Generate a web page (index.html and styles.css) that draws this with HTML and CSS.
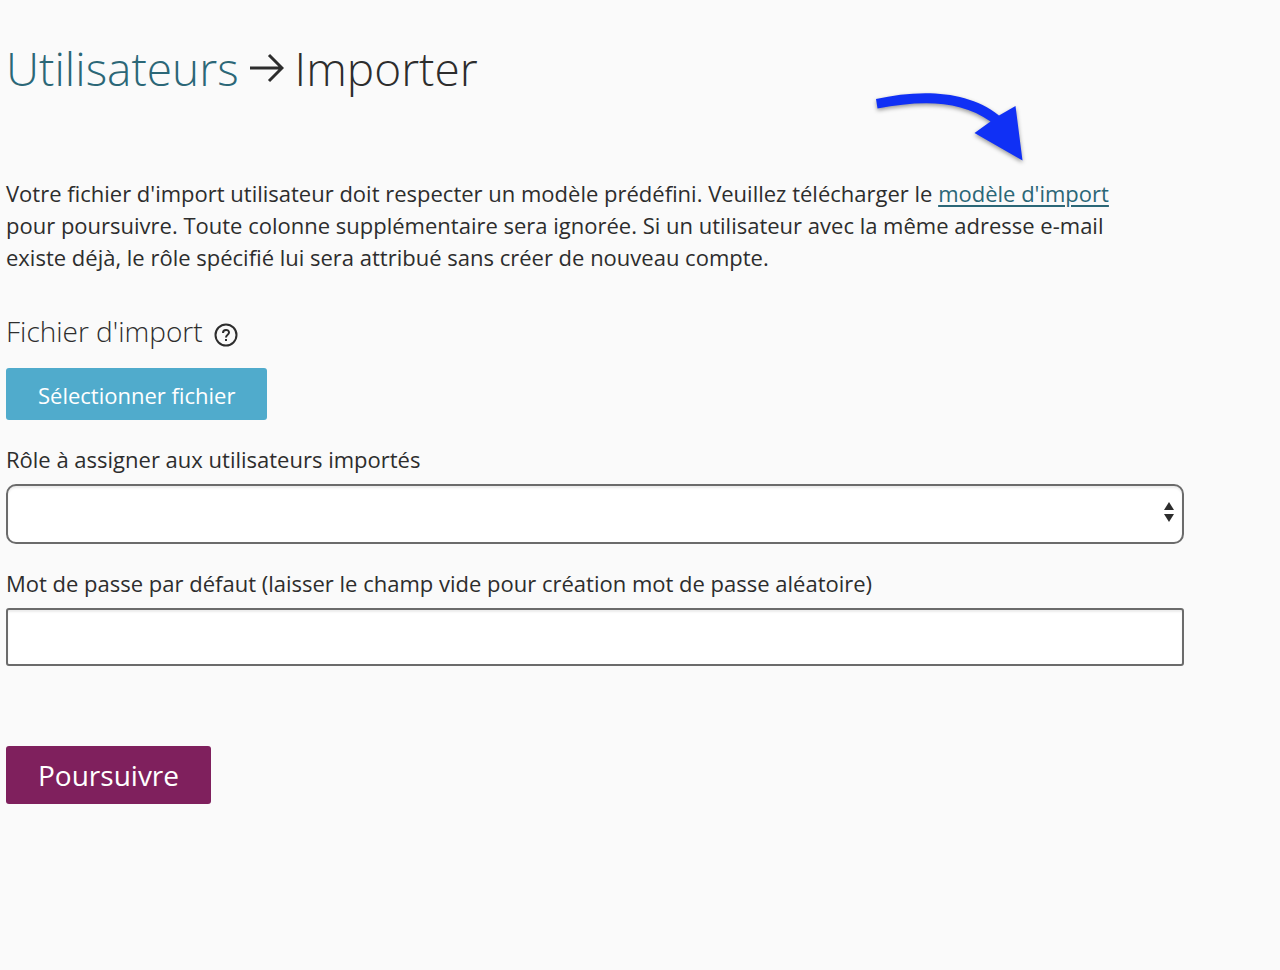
FILE: index.html
```html
<!DOCTYPE html>
<html lang="fr">
<head>
<meta charset="utf-8">
<title>Importer des utilisateurs</title>
<link rel="stylesheet" href="styles.css">
</head>
<body>
<main class="page">
  <h1 class="title">
    <a class="title-link" href="#">Utilisateurs</a>
    <svg class="title-arrow" viewBox="0 0 34 30" aria-hidden="true"><path d="M0 15H32M19 2L32 15L19 28"/></svg>
    <span>Importer</span>
  </h1>
  <p class="intro">Votre fichier d'import utilisateur doit respecter un modèle prédéfini. Veuillez télécharger le <a class="link" href="#">modèle d'import<svg class="pointer" viewBox="0 0 154 76" aria-hidden="true"><path d="M4 11C45 2 94 1 127 27.500L143.500 18L150.500 72.500L102.500 45L118.500 33.500C88 12 50 12 5.500 20.500Z"/></svg></a> pour poursuivre. Toute colonne supplémentaire sera ignorée. Si un utilisateur avec la même adresse e-mail existe déjà, le rôle spécifié lui sera attribué sans créer de nouveau compte.</p>
  <form class="form">
    <section class="file">
      <h2 class="subtitle">Fichier d'import
        <svg class="help" viewBox="0 0 24 24" aria-hidden="true"><circle cx="12" cy="12" r="10.500"/><path d="M9 10C9 6 15 6 15 9.500C15 12 12 11.500 12 14.500M12 16V18"/></svg>
      </h2>
      <button class="button select-file" type="button">Sélectionner fichier</button>
    </section>
    <div class="field">
      <label for="role">Rôle à assigner aux utilisateurs importés</label>
      <div class="select-wrap">
        <select class="control select" id="role"><option></option></select>
        <svg class="caret" viewBox="0 0 10 20" aria-hidden="true"><path d="M0 8L5 0L10 8ZM0 12H10L5 20Z"/></svg>
      </div>
    </div>
    <div class="field">
      <label for="password">Mot de passe par défaut (laisser le champ vide pour création mot de passe aléatoire)</label>
      <input class="control" id="password" type="text">
    </div>
    <button class="button submit" type="submit">Poursuivre</button>
  </form>
</main>
</body>
</html>
```
FILE: styles.css
```css
* { box-sizing: border-box; }
body {
  margin: 0;
  background: #fafafa;
  color: #2d2d2d;
  font: 400 22px/32px "Open Sans", sans-serif;
}
.page { padding: 35px 96px 35px 6px; }
.title {
  display: flex;
  align-items: center;
  gap: 11px;
  margin: 0 0 76px;
  font-size: 46px;
  line-height: 66px;
  font-weight: 300;
}
.title-link { color: #2b6777; text-decoration: none; }
.title-arrow { width: 34px; height: 30px; fill: none; stroke: currentColor; stroke-width: 3; }
.intro { margin: 0; max-width: 1140px; }
.link { position: relative; color: #2b6777; text-decoration-thickness: 2px; text-underline-offset: 3px; }
.pointer { position: absolute; right: 83px; bottom: 44px; width: 154px; height: 76px; fill: #1030f5; filter: drop-shadow(0 2px 2px rgba(0, 0, 0, .4)); }
.form { display: flex; flex-direction: column; gap: 23px; margin-top: 37px; }
.subtitle {
  display: flex;
  align-items: center;
  gap: 11px;
  margin: 0 0 16px;
  font-size: 28px;
  line-height: 42px;
  font-weight: 300;
}
.help { width: 24px; height: 24px; margin-top: 8px; fill: none; stroke: currentColor; stroke-width: 2; }
.button { border: 0; border-radius: 3px; color: #fff; font: inherit; }
.select-file { height: 52px; padding: 2px 32px 0; background: #50abcc; font-weight: 500; }
.field { display: flex; flex-direction: column; gap: 9px; }
.control {
  width: 100%;
  height: 58px;
  padding: 0 16px;
  border: 2px solid #6b6b6b;
  border-radius: 3px;
  background: #fff;
  box-shadow: inset 0 2px 2px rgba(0, 0, 0, .08);
  color: inherit;
  font: inherit;
}
.select-wrap { position: relative; display: flex; }
.select { height: 60px; border-radius: 10px; appearance: none; }
.caret { position: absolute; top: 18px; right: 10px; width: 10px; height: 20px; fill: #2d2d2d; pointer-events: none; }
.submit { align-self: flex-start; height: 58px; margin-top: 57px; padding: 0 32px; background: #7f205d; font-size: 28px; }
```
